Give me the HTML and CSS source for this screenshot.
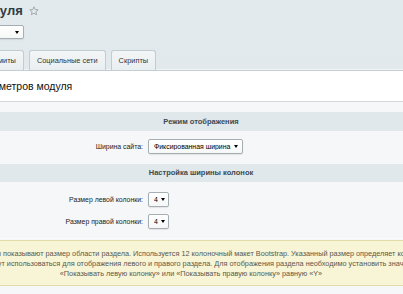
FILE: index.html
```html
<!DOCTYPE html>
<html lang="ru">
<head>
<meta charset="utf-8">
<link rel="stylesheet" href="styles.css">
</head>
<body>
<div class="page">
  <div class="title-row">
    <h1 class="title">Настройки модуля</h1>
    <svg class="star" width="10" height="10" viewBox="0 0 10 10"><path d="M5 0.8 L6.2 3.6 L9.2 3.8 L6.9 5.8 L7.6 8.8 L5 7.2 L2.4 8.8 L3.1 5.8 L0.8 3.8 L3.8 3.6 Z" fill="none" stroke="#9aa6ab" stroke-width="0.9" stroke-linejoin="round"/></svg>
  </div>
  <div class="site-row">
    <div class="fake-select site-select"><span class="sel-text">s1 Сайт</span><span class="arrow"></span></div>
  </div>
  <div class="tabs">
    <div class="tab">Лимиты</div>
    <div class="tab">Социальные сети</div>
    <div class="tab">Скрипты</div>
  </div>
  <div class="panel">
    <div class="panel-head">Настройка параметров модуля</div>
    <div class="panel-body">
      <div class="sect-head">Режим отображения</div>
      <div class="row row-a">
        <div class="label">Ширина сайта:</div>
        <div class="field"><div class="fake-select wide"><span class="sel-text">Фиксированная ширина</span><span class="arrow"></span></div></div>
      </div>
      <div class="sect-head sect-head-2">Настройка ширины колонок</div>
      <div class="row row-b">
        <div class="label">Размер левой колонки:</div>
        <div class="field"><div class="fake-select small"><span class="sel-text">4</span><span class="arrow"></span></div></div>
      </div>
      <div class="row row-c">
        <div class="label">Размер правой колонки:</div>
        <div class="field"><div class="fake-select small"><span class="sel-text">4</span><span class="arrow"></span></div></div>
      </div>
      <div class="note">
        <div class="note-line">Эти цифры показывают размер области раздела. Используется 12 колоночный макет Bootstrap. Указанный размер определяет кол-во</div>
        <div class="note-line">Колонки будут использоваться для отображения левого и правого раздела. Для отображения раздела необходимо установить значение и</div>
        <div class="note-line">«Показывать левую колонку» или «Показывать правую колонку» равную «Y»</div>
      </div>
    </div>
  </div>
</div>
</body>
</html>
```

FILE: styles.css
```css
html, body {
  margin: 0;
  padding: 0;
}
body {
  overflow: hidden;
  height: 294px;
  background: linear-gradient(#e3eaed, #dfe7ea);
  font-family: "Liberation Sans", Arial, sans-serif;
  color: #000;
}
.page {
  margin-left: -100px;
  width: 602px;
}
.title-row {
  display: flex;
  align-items: center;
  height: 22px;
  padding-left: 2px;
}
.title {
  margin: 0;
  font-size: 13px;
  font-weight: bold;
  color: #2f3b42;
  line-height: 22px;
}
.star {
  margin-left: 6px;
  margin-top: -1px;
}
.site-row {
  padding-top: 3px;
  height: 25px;
}
.fake-select {
  box-sizing: border-box;
  display: flex;
  align-items: center;
  height: 15px;
  background: linear-gradient(#ffffff, #f6f7f7);
  border: 1px solid #a5afb3;
  border-radius: 2px;
  box-shadow: 0 1px 1px rgba(0,0,0,0.08);
  font-size: 6.9px;
  color: #000;
  padding-left: 5px;
  padding-right: 4px;
}
.sel-text {
  flex: 1;
  white-space: nowrap;
  overflow: hidden;
}
.arrow {
  width: 0;
  height: 0;
  border-left: 2px solid transparent;
  border-right: 2px solid transparent;
  border-top: 3px solid #000;
}
.site-select {
  width: 124px;
  height: 14px;
  color: transparent;
}
.wide {
  width: 95px;
}
.small {
  width: 21px;
  padding-left: 5px;
  padding-right: 3px;
}
.tabs {
  display: flex;
  gap: 5px;
  padding-left: 81px;
  height: 20px;
  align-items: flex-end;
}
.tab {
  box-sizing: border-box;
  height: 20px;
  padding: 0 7px;
  display: flex;
  align-items: center;
  font-size: 7.4px;
  color: #333;
  background: linear-gradient(#f3f6f7, #e9eef0);
  border: 1px solid #c3ccd0;
  border-bottom: none;
  border-radius: 3px 3px 0 0;
  white-space: nowrap;
}
.panel {
  border-top: 1px solid #c4cdd1;
  box-shadow: 0 -1px 0 #f2f5f6;
  background: #f5f7f8;
}
.panel-head {
  background: #fff;
  border-top: 1px solid #fff;
  height: 29px;
  line-height: 29px;
  padding-left: 21px;
  font-size: 10.5px;
  color: #111;
  border-bottom: 1px solid #d2dadd;
  white-space: nowrap;
}
.panel-body {
  padding-top: 10px;
  padding-bottom: 20px;
}
.sect-head {
  height: 19px;
  line-height: 19px;
  background: #e0e8eb;
  text-align: center;
  font-size: 7.5px;
  font-weight: bold;
  color: #3c4a52;
}
.sect-head-2 {
  height: 18px;
  line-height: 18px;
}
.row {
  display: grid;
  grid-template-columns: 247px 1fr;
  align-items: center;
}
.row-a {
  padding: 8px 0 10px;
}
.row-b {
  padding: 10px 0 7px;
}
.row-c {
  padding: 0 0 9px;
  border-bottom: 1px solid #fbfcfc;
}
.label {
  text-align: right;
  padding-right: 4px;
  font-size: 6.9px;
  color: #222;
  white-space: nowrap;
}
.field {
  padding-left: 1px;
}
.note {
  margin-top: 1px;
  margin-right: 20px;
  background: #f8f4d6;
  border: 1px solid #e4dca8;
  padding: 8px 0 6px;
  text-align: center;
  font-size: 7.3px;
  line-height: 10px;
  color: #5b5a4c;
}
.note-line {
  white-space: nowrap;
}
```
